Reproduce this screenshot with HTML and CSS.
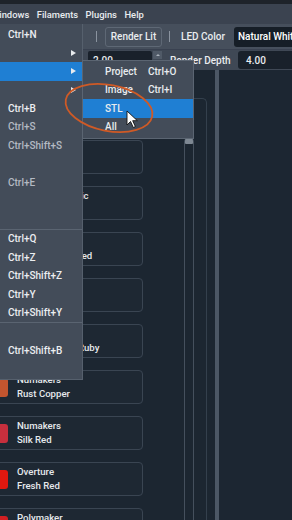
FILE: index.html
```html
<!DOCTYPE html>
<html>
  <head>
    <meta charset="UTF-8">
    <meta name="viewport" content="width=device-width, initial-scale=1">
    <title>Filament Picker</title>
    <link rel="stylesheet" href="styles.css">
  </head>
  <body>
    <div class="app">
      <div class="top-strip"></div>
      <div class="menubar">
        <span class="menubar-item first">Windows</span>
        <span class="menubar-item">Filaments</span>
        <span class="menubar-item">Plugins</span>
        <span class="menubar-item">Help</span>
      </div>
      <div class="toolbar">
        <span class="sep"></span>
        <span class="tool-btn">Render Lit</span>
        <span class="sep sep-right"></span>
        <span class="tool-label">LED Color</span>
        <span class="select">Natural White</span>
      </div>
      <div class="options">
        <span class="field field-small">2.00</span>
        <span class="spin"><span class="spin-up"></span></span>
        <span class="option-label">Render Depth</span>
        <span class="field field-depth">4.00</span>
      </div>
      <div class="workspace">
        <div class="filament-panel">
          <div class="filament-list">
            <div class="card"><span class="swatch swatch-red"></span><div class="card-text"><span>Sunlu</span><span>Red</span></div></div>
            <div class="card"><span class="swatch swatch-red"></span><div class="card-text"><span>Polymaker Basic</span><span>Red</span></div></div>
            <div class="card"><span class="swatch swatch-red"></span><div class="card-text"><span>eSUN</span><span>Signal Traffic Red</span></div></div>
            <div class="card"><span class="swatch swatch-red"></span><div class="card-text"><span>Elegoo</span><span>Red</span></div></div>
            <div class="card"><span class="swatch swatch-ruby"></span><div class="card-text"><span>Polymaker</span><span>Metallic Deep Ruby</span></div></div>
            <div class="card"><span class="swatch swatch-copper"></span><div class="card-text"><span>Numakers</span><span>Rust Copper</span></div></div>
            <div class="card"><span class="swatch swatch-silk"></span><div class="card-text"><span>Numakers</span><span>Silk Red</span></div></div>
            <div class="card"><span class="swatch swatch-fresh"></span><div class="card-text"><span>Overture</span><span>Fresh Red</span></div></div>
            <div class="card"><span class="swatch swatch-red"></span><div class="card-text"><span>Polymaker</span><span>Red</span></div></div>
          </div>
          <div class="slider"><span class="slider-knob"></span></div>
        </div>
        <div class="splitter"></div>
        <div class="viewport"></div>
      </div>
    </div>

    <div class="menu">
      <div class="menu-item">Ctrl+N</div>
      <div class="menu-item"><span class="arrow"></span></div>
      <div class="menu-item active"><span class="arrow"></span></div>
      <div class="menu-item"><span class="arrow"></span></div>
      <div class="menu-item">Ctrl+B</div>
      <div class="menu-item dim">Ctrl+S</div>
      <div class="menu-item dim">Ctrl+Shift+S</div>
      <div class="menu-item"></div>
      <div class="menu-item dim">Ctrl+E</div>
      <div class="menu-item"></div>
      <div class="menu-item"></div>
      <div class="menu-sep"></div>
      <div class="menu-item">Ctrl+Q</div>
      <div class="menu-item">Ctrl+Z</div>
      <div class="menu-item">Ctrl+Shift+Z</div>
      <div class="menu-item">Ctrl+Y</div>
      <div class="menu-item">Ctrl+Shift+Y</div>
      <div class="menu-sep"></div>
      <div class="menu-item"></div>
      <div class="menu-item">Ctrl+Shift+B</div>
      <div class="menu-item"></div>
    </div>

    <div class="submenu">
      <div class="sub-item"><span class="sub-label">Project</span><span>Ctrl+O</span></div>
      <div class="sub-item"><span class="sub-label">Image</span><span>Ctrl+I</span></div>
      <div class="sub-item active"><span class="sub-label">STL</span></div>
      <div class="sub-item"><span class="sub-label">All</span></div>
    </div>

    <svg class="overlay" width="292" height="520" viewBox="0 0 292 520">
      <ellipse cx="109" cy="108" rx="44" ry="23" transform="rotate(11 109 108)" fill="none" stroke="#cf5a26" stroke-width="1.8"/>
      <path d="M127 111 L127 125 L130.5 121.5 L133.3 127.5 L135.4 126.6 L132.7 120.7 L137.4 120.7 Z" fill="#ffffff" stroke="#111111" stroke-width="0.9" stroke-linejoin="round"/>
    </svg>
  </body>
</html>
```

FILE: styles.css
```css
* {
  box-sizing: border-box;
}
body {
  margin: 0;
  width: 292px;
  height: 520px;
  overflow: hidden;
  position: relative;
  background-color: #1c2631;
  font-family: Roboto, "Noto Sans", sans-serif;
  font-weight: 500;
  font-size: 10px;
  color: #e9ecef;
}
.app {
  display: flex;
  flex-direction: column;
  height: 520px;
}
.top-strip {
  height: 4px;
  background-color: #1e232a;
}
.menubar {
  height: 20px;
  display: flex;
  align-items: center;
  gap: 7.5px;
  background-color: #3b4350;
  font-size: 9.4px;
  white-space: nowrap;
}
.menubar-item.first {
  margin-left: -9px;
}

/* toolbar */
.toolbar {
  height: 26px;
  display: flex;
  align-items: center;
  padding-left: 96px;
  background-color: #464f5c;
  border-bottom: 1px solid #394150;
  white-space: nowrap;
}
.toolbar > span {
  flex: none;
}
.sep {
  width: 1px;
  height: 11px;
  background-color: #8a939f;
}
.tool-btn {
  margin-left: 8px;
  width: 57px;
  height: 20px;
  display: flex;
  align-items: center;
  justify-content: center;
  border: 1px solid #5e6875;
  border-radius: 3px;
}
.sep-right {
  margin-left: 7px;
}
.tool-label {
  margin-left: 11px;
  width: 53px;
}
.select {
  width: 80px;
  height: 20px;
  padding-left: 4px;
  display: flex;
  align-items: center;
  background-color: #161e27;
  border-radius: 3px;
  color: #ffffff;
}

/* options row */
.options {
  height: 20px;
  display: flex;
  align-items: center;
  background-color: #3f4855;
  white-space: nowrap;
}
.options > span {
  flex: none;
}
.field {
  height: 18px;
  display: flex;
  align-items: center;
  padding-left: 5px;
  background-color: #19212b;
  border-radius: 2px;
}
.field-small {
  margin-left: 88px;
  width: 64px;
}
.spin {
  margin-left: 1px;
  align-self: flex-start;
  margin-top: 1px;
  width: 9px;
  height: 8px;
  background-color: #505a67;
  display: flex;
  align-items: center;
  justify-content: center;
}
.spin-up {
  border-left: 2px solid transparent;
  border-right: 2px solid transparent;
  border-bottom: 2px solid #aab2bc;
}
.option-label {
  margin-left: 8px;
  width: 68px;
}
.options > .field-depth {
  flex: 1;
  padding-left: 8px;
  border-radius: 3px 0 0 3px;
}

/* workspace */
.workspace {
  flex: 1;
  display: flex;
  overflow: hidden;
}
.filament-panel {
  flex: none;
  margin-top: 28px;
  margin-left: -20px;
  width: 227px;
  display: flex;
  align-items: flex-start;
  border: 1px solid #34404d;
  border-bottom: none;
  border-radius: 5px 5px 0 0;
}
.filament-list {
  flex: none;
  padding-top: 41px;
  padding-left: 7px;
  display: flex;
  flex-direction: column;
  gap: 12px;
}
.card {
  width: 155px;
  height: 34px;
  display: flex;
  align-items: center;
  border: 1px solid #3a4552;
  border-radius: 4px;
  background-color: #1e2833;
}
.swatch {
  flex: none;
  margin-left: -1px;
  width: 20px;
  height: 19px;
  border-radius: 3px;
}
.swatch-red {
  background-color: #d21f22;
}
.swatch-ruby {
  background-color: #a81c34;
}
.swatch-copper {
  background-color: #c2552f;
}
.swatch-silk {
  background-color: #c62f3d;
}
.swatch-fresh {
  background-color: #e0180f;
}
.card-text {
  margin-left: 9px;
  display: flex;
  flex-direction: column;
  font-size: 9.6px;
  line-height: 14px;
  white-space: nowrap;
  color: #e6e9ed;
}
.slider {
  flex: none;
  margin-top: 38px;
  margin-left: 41px;
  width: 10px;
  height: 400px;
  border-left: 1px solid #45505d;
  border-right: 1px solid #45505d;
  border-radius: 5px 5px 0 0;
}
.slider-knob {
  display: block;
  height: 7px;
  background-color: #7e8893;
  border-radius: 4px 4px 1px 1px;
}
.splitter {
  flex: none;
  margin-left: 8px;
  width: 4px;
  background-color: #4c5765;
}
.viewport {
  flex: 1;
  background-color: #1c2632;
}

/* popup menu */
.menu {
  position: absolute;
  left: 0;
  top: 24px;
  width: 83px;
  padding-top: 1px;
  background-color: #434c59;
  border-right: 1px solid #56606d;
  border-bottom: 1px solid #56606d;
}
.menu-item {
  height: 18.5px;
  padding-left: 8px;
  display: flex;
  align-items: center;
  color: #eceef1;
  white-space: nowrap;
}
.menu-item.dim {
  color: #b4bac3;
}
.menu-item.active {
  background-color: #1f7fd3;
}
.menu-sep {
  height: 1px;
  background-color: #5a6471;
}
.arrow {
  margin-left: auto;
  margin-right: 6px;
  border-top: 3.5px solid transparent;
  border-bottom: 3.5px solid transparent;
  border-left: 5px solid #e8ebee;
}

/* submenu */
.submenu {
  position: absolute;
  left: 82px;
  top: 60px;
  width: 112px;
  padding: 1px 0 1.5px;
  background-color: #434c59;
  border: 1px solid #5b6572;
}
.sub-item {
  height: 18.5px;
  padding-left: 22px;
  display: flex;
  align-items: center;
  white-space: nowrap;
}
.sub-item.active {
  background-color: #1f7fd3;
}
.sub-label {
  width: 43px;
}

.overlay {
  position: absolute;
  left: 0;
  top: 0;
  pointer-events: none;
}
```
